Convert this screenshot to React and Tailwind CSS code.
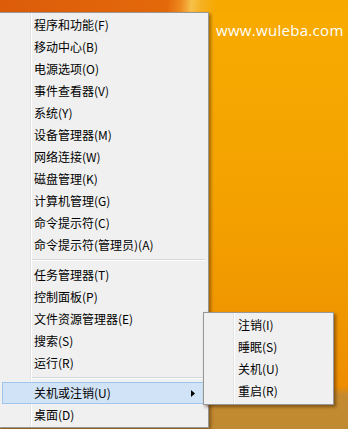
import React from 'react'

const mainGroups = [
    ['程序和功能(F)', '移动中心(B)', '电源选项(O)', '事件查看器(V)', '系统(Y)', '设备管理器(M)', '网络连接(W)', '磁盘管理(K)', '计算机管理(G)', '命令提示符(C)', '命令提示符(管理员)(A)'],
    ['任务管理器(T)', '控制面板(P)', '文件资源管理器(E)', '搜索(S)', '运行(R)'],
]

const subItems = ['注销(I)', '睡眠(S)', '关机(U)', '重启(R)']

const Separator = () => (
    <div className="h-[8px] flex items-center ml-[32px] mr-[3px]">
        <div className="w-full h-px bg-[#d7d7d7] border-b border-white box-content"></div>
    </div>
)

const Row = ({ label }) => (
    <div className="relative h-[22px] flex items-center pl-[35px] whitespace-nowrap">{label}</div>
)

const App = () => {
    return (
        <div className="relative w-[348px] h-[429px] overflow-hidden text-[12px] text-black font-['Noto_Sans_CJK_SC','Noto_Sans',sans-serif] bg-[linear-gradient(to_bottom,#f8ab00_0%,#f4a200_45%,#f09600_75%,#ee8e00_90%,#c68a2e_92%,#bf8a32_100%)]">
            {/* wallpaper top strip */}
            <div className="h-[12px] bg-[linear-gradient(95deg,#dc5c0a_0%,#e4690a_48%,#ee8a20_52%,#f7c24a_55%,#f6b020_58%,#f7a900_62%)]"></div>
            <div className="pl-[216px] pt-[11px] leading-none text-white text-[15px] font-['Open_Sans',sans-serif] tracking-[0.3px]">www.wuleba.com</div>

            {/* main context menu */}
            <div className="absolute left-[-2px] top-[12px] w-[211px] h-[416px] bg-[#f0f0f0] border border-[#979797] shadow-[2px_2px_3px_rgba(60,30,0,0.45)] pt-[1px]">
                <div className="absolute left-[31px] top-0 bottom-0 w-px bg-[#e2e3e3] border-r border-white box-content"></div>
                {mainGroups[0].map((t) => <Row key={t} label={t} />)}
                <Separator />
                {mainGroups[1].map((t) => <Row key={t} label={t} />)}
                <Separator />
                <div className="relative h-[22px] ml-[3px] mr-[4px] flex items-center pl-[31px] bg-[#d1e3f6] border border-[#9fc5ec]">
                    <span className="flex-1">关机或注销(U)</span>
                    <svg width="4" height="7" viewBox="0 0 4 7" className="mr-[8px]">
                        <path d="M0 0 L4 3.5 L0 7 Z" fill="#000" />
                    </svg>
                </div>
                <Row label="桌面(D)" />
            </div>

            {/* sub menu */}
            <div className="absolute left-[203px] top-[312px] w-[131px] bg-[#f0f0f0] border border-[#979797] shadow-[2px_2px_3px_rgba(60,30,0,0.5)] pt-[1px] pb-[2px]">
                <div className="absolute left-[29px] top-0 bottom-0 w-px bg-[#e2e3e3] border-r border-white box-content"></div>
                {subItems.map((t) => (
                    <div key={t} className="relative h-[22px] flex items-center pl-[34px]">{t}</div>
                ))}
            </div>
        </div>
    )
}

export default App
